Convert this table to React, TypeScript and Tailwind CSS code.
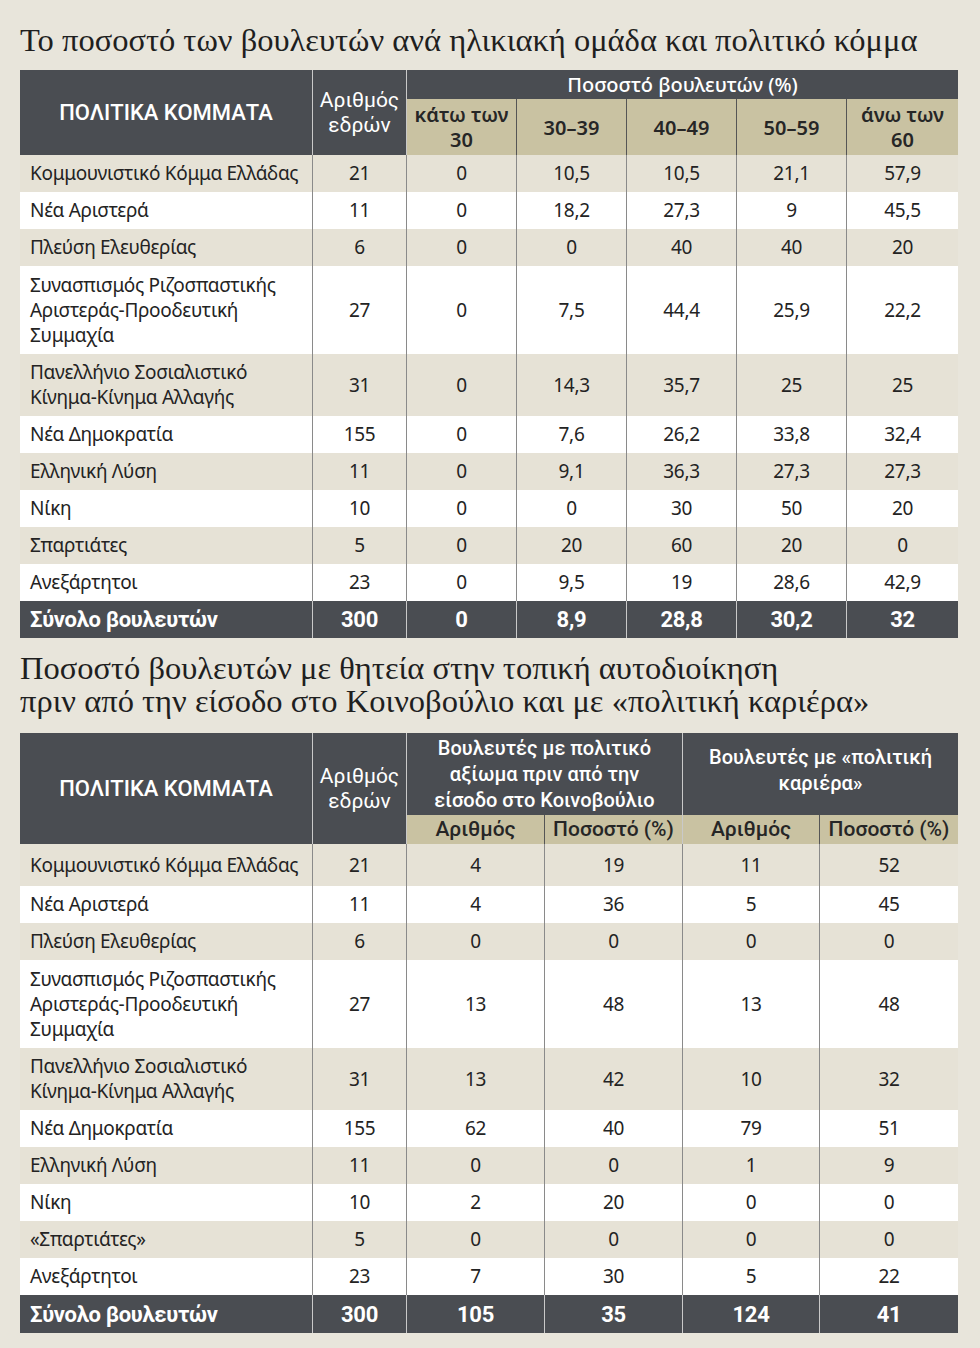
const BODY = "font-['Noto_Sans',sans-serif]";
const NARROW = "font-['Roboto',sans-serif]";
const TITLE = "font-['Liberation_Serif',serif]";

const T1_COLS = "grid-cols-[292px_94px_110px_110px_110px_110px_1fr]";
const T2_COLS = "grid-cols-[292px_94px_138px_138px_137px_1fr]";

const HEIGHTS: Record<number, string> = {
  1: "h-[37px]",
  2: "h-[62px]",
  3: "h-[88px]",
};

const table1 = [
  ["Κομμουνιστικό Κόμμα Ελλάδας", "21", "0", "10,5", "10,5", "21,1", "57,9"],
  ["Νέα Αριστερά", "11", "0", "18,2", "27,3", "9", "45,5"],
  ["Πλεύση Ελευθερίας", "6", "0", "0", "40", "40", "20"],
  ["Συνασπισμός Ριζοσπαστικής\nΑριστεράς-Προοδευτική\nΣυμμαχία", "27", "0", "7,5", "44,4", "25,9", "22,2"],
  ["Πανελλήνιο Σοσιαλιστικό\nΚίνημα-Κίνημα Αλλαγής", "31", "0", "14,3", "35,7", "25", "25"],
  ["Νέα Δημοκρατία", "155", "0", "7,6", "26,2", "33,8", "32,4"],
  ["Ελληνική Λύση", "11", "0", "9,1", "36,3", "27,3", "27,3"],
  ["Νίκη", "10", "0", "0", "30", "50", "20"],
  ["Σπαρτιάτες", "5", "0", "20", "60", "20", "0"],
  ["Ανεξάρτητοι", "23", "0", "9,5", "19", "28,6", "42,9"],
];
const total1 = ["Σύνολο βουλευτών", "300", "0", "8,9", "28,8", "30,2", "32"];

const table2 = [
  ["Κομμουνιστικό Κόμμα Ελλάδας", "21", "4", "19", "11", "52"],
  ["Νέα Αριστερά", "11", "4", "36", "5", "45"],
  ["Πλεύση Ελευθερίας", "6", "0", "0", "0", "0"],
  ["Συνασπισμός Ριζοσπαστικής\nΑριστεράς-Προοδευτική\nΣυμμαχία", "27", "13", "48", "13", "48"],
  ["Πανελλήνιο Σοσιαλιστικό\nΚίνημα-Κίνημα Αλλαγής", "31", "13", "42", "10", "32"],
  ["Νέα Δημοκρατία", "155", "62", "40", "79", "51"],
  ["Ελληνική Λύση", "11", "0", "0", "1", "9"],
  ["Νίκη", "10", "2", "20", "0", "0"],
  ["«Σπαρτιάτες»", "5", "0", "0", "0", "0"],
  ["Ανεξάρτητοι", "23", "7", "30", "5", "22"],
];
const total2 = ["Σύνολο βουλευτών", "300", "105", "35", "124", "41"];

function Row({ cells, cols, index, tall }: { cells: string[]; cols: string; index: number; tall?: boolean }) {
  const lines = cells[0].split("\n").length;
  const bg = index % 2 === 0 ? "bg-[#e6e2d6]" : "bg-white";
  const h = tall ? "h-[42px]" : HEIGHTS[lines];
  return (
    <div className={`grid ${cols} ${h} ${bg} ${BODY} text-[19px] tracking-[-0.3px] text-[#232323]`}>
      {cells.map((c, i) =>
        i === 0 ? (
          <div key={i} className="flex items-center whitespace-pre-line pl-[10px] leading-[25px]">
            {c}
          </div>
        ) : (
          <div key={i} className="flex items-center justify-center border-l border-[#8a8a8a]">
            {c}
          </div>
        )
      )}
    </div>
  );
}

function TotalRow({ cells, cols, h = "h-[37px]" }: { cells: string[]; cols: string; h?: string }) {
  return (
    <div className={`grid ${cols} ${h} bg-[#4a4d52] text-white ${NARROW} text-[22px] font-bold tracking-[-0.3px]`}>
      {cells.map((c, i) =>
        i === 0 ? (
          <div key={i} className="flex items-center pl-[10px]">
            {c}
          </div>
        ) : (
          <div key={i} className="flex items-center justify-center border-l border-[#c9c9c9]">
            {c}
          </div>
        )
      )}
    </div>
  );
}

function AgeTable() {
  return (
    <div className="w-[938px]">
      <div className={`grid ${T1_COLS} grid-rows-[29px_56px]`}>
        <div className={`row-span-2 flex items-center justify-center bg-[#4a4d52] text-white ${NARROW} text-[22px] font-medium`}>
          ΠΟΛΙΤΙΚΑ ΚΟΜΜΑΤΑ
        </div>
        <div className={`row-span-2 flex items-center justify-center border-l border-[#c9c9c9] bg-[#4a4d52] text-center text-white ${NARROW} text-[21px] leading-[25px]`}>
          Αριθμός
          <br />
          εδρών
        </div>
        <div className={`col-span-5 flex items-center justify-center border-l border-[#c9c9c9] bg-[#4a4d52] text-white ${BODY} text-[20px] font-medium`}>
          Ποσοστό βουλευτών (%)
        </div>
        {["κάτω των\n30", "30–39", "40–49", "50–59", "άνω των\n60"].map((h, i) => (
          <div
            key={h}
            className={`flex items-center justify-center whitespace-pre-line bg-[#c9c2a2] text-center text-[#262626] ${BODY} text-[20px] font-semibold leading-[25px] border-l ${i === 0 ? "border-[#c9c9c9]" : "border-[#555]"}`}
          >
            {h}
          </div>
        ))}
      </div>
      {table1.map((r, i) => (
        <Row key={i} cells={r} cols={T1_COLS} index={i} />
      ))}
      <TotalRow cells={total1} cols={T1_COLS} />
    </div>
  );
}

function CareerTable() {
  return (
    <div className="w-[938px]">
      <div className={`grid ${T2_COLS} grid-rows-[82px_29px]`}>
        <div className={`row-span-2 flex items-center justify-center bg-[#4a4d52] text-white ${NARROW} text-[22px] font-medium`}>
          ΠΟΛΙΤΙΚΑ ΚΟΜΜΑΤΑ
        </div>
        <div className={`row-span-2 flex items-center justify-center border-l border-[#c9c9c9] bg-[#4a4d52] text-center text-white ${NARROW} text-[21px] leading-[25px]`}>
          Αριθμός
          <br />
          εδρών
        </div>
        <div className={`col-span-2 flex items-center justify-center border-l border-[#c9c9c9] bg-[#4a4d52] text-center text-white ${NARROW} text-[20px] font-medium leading-[26px]`}>
          Βουλευτές με πολιτικό
          <br />
          αξίωμα πριν από την
          <br />
          είσοδο στο Κοινοβούλιο
        </div>
        <div className={`col-span-2 flex items-center justify-center border-l border-[#c9c9c9] bg-[#4a4d52] pb-[8px] text-center text-white ${NARROW} text-[20px] font-medium leading-[26px]`}>
          Βουλευτές με «πολιτική
          <br />
          καριέρα»
        </div>
        {["Αριθμός", "Ποσοστό (%)", "Αριθμός", "Ποσοστό (%)"].map((h, i) => (
          <div
            key={i}
            className={`flex items-center justify-center whitespace-nowrap bg-[#c9c2a2] text-[#262626] ${NARROW} text-[21px] font-medium border-l ${i === 0 || i === 2 ? "border-[#c9c9c9]" : "border-[#555]"}`}
          >
            {h}
          </div>
        ))}
      </div>
      {table2.map((r, i) => (
        <Row key={i} cells={r} cols={T2_COLS} index={i} tall={i === 0} />
      ))}
      <TotalRow cells={total2} cols={T2_COLS} h="h-[38px]" />
    </div>
  );
}

export default function App() {
  return (
    <div className="min-h-[1348px] w-[980px] bg-[#e8e5db] px-[20px] pt-[20px]">
      <h1 className={`${TITLE} text-[32.5px] leading-[40px] text-[#1f1f1f]`}>
        Το ποσοστό των βουλευτών ανά ηλικιακή ομάδα και πολιτικό κόμμα
      </h1>
      <div className="mt-[10px]">
        <AgeTable />
      </div>
      <h2 className={`${TITLE} mt-[14px] text-[32.5px] leading-[33px] text-[#1f1f1f]`}>
        Ποσοστό βουλευτών με θητεία στην τοπική αυτοδιοίκηση
        <br />
        πριν από την είσοδο στο Κοινοβούλιο και με «πολιτική καριέρα»
      </h2>
      <div className="mt-[15px]">
        <CareerTable />
      </div>
    </div>
  );
}
